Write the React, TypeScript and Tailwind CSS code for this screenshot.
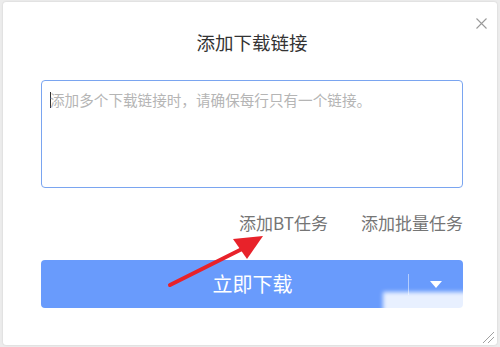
import React from 'react'

const font = { fontFamily: '"Noto Sans CJK SC", "Noto Sans", sans-serif' }

export default function App() {
  return (
    <div className="relative w-[500px] h-[347px] bg-[#ececec] pt-[2px] px-[3px] overflow-hidden" style={font}>
      <div className="relative h-[343px] bg-white rounded-[3px] shadow-[0_0_2px_rgba(0,0,0,0.15)] pt-[27px] pl-[38px] pr-[34px]">
        {/* close */}
        <button className="absolute right-[9px] top-[14px] w-[14px] h-[14px] flex items-center justify-center">
          <svg width="11" height="11" viewBox="0 0 11 11" stroke="#9a9a9a" strokeWidth="1.1">
            <path d="M0.5 0.5 L10.5 10.5 M10.5 0.5 L0.5 10.5" />
          </svg>
        </button>

        <h2 className="text-center text-[18.5px] leading-[26px] text-[#333]">添加下载链接</h2>

        {/* textarea */}
        <div className="mt-[25px] h-[108px] rounded-[4px] border border-[#7aa5f0] px-[8px] pt-[9px]">
          <div className="flex items-center text-[14.6px] leading-[20px] text-[#b5b5b5]">
            <span className="w-px h-[16px] bg-[#333] mr-[-1px]" />
            <span>添加多个下载链接时，请确保每行只有一个链接。</span>
          </div>
        </div>

        {/* links */}
        <div className="mt-[24px] flex justify-end gap-[33px] text-[17px] leading-[22px] text-[#757575]">
          <span>添加BT任务</span>
          <span>添加批量任务</span>
        </div>

        {/* button */}
        <div className="mt-[26px] h-[48px] rounded-[4px] bg-[#699bfc] flex items-center text-white">
          <div className="flex-1 text-center text-[20px] pl-[56px]">立即下载</div>
          <div className="w-px h-[21px] bg-white/50" />
          <div className="w-[54px] flex justify-center">
            <svg width="12" height="7" viewBox="0 0 12 7" fill="white">
              <path d="M0 0 H12 L6 7 Z" />
            </svg>
          </div>
        </div>

        {/* resize grip */}
        <svg className="absolute right-[2px] bottom-[1px]" width="14" height="14" viewBox="0 0 14 14" stroke="#a0a0a0" strokeWidth="1">
          <path d="M13 2 L2 13 M13 7 L7 13" />
        </svg>
      </div>

      {/* blurred watermark */}
      <div className="absolute left-[383px] top-[292px] w-[91px] h-[44px] bg-white/85 blur-[2px]" />

      {/* red arrow */}
      <svg className="absolute left-0 top-0" width="500" height="347" viewBox="0 0 500 347">
        <path d="M170 285 L244 248" stroke="#e8222a" strokeWidth="4" strokeLinecap="round" />
        <path d="M263 236 L233 239 L247 259 Z" fill="#e8222a" />
      </svg>
    </div>
  )
}
